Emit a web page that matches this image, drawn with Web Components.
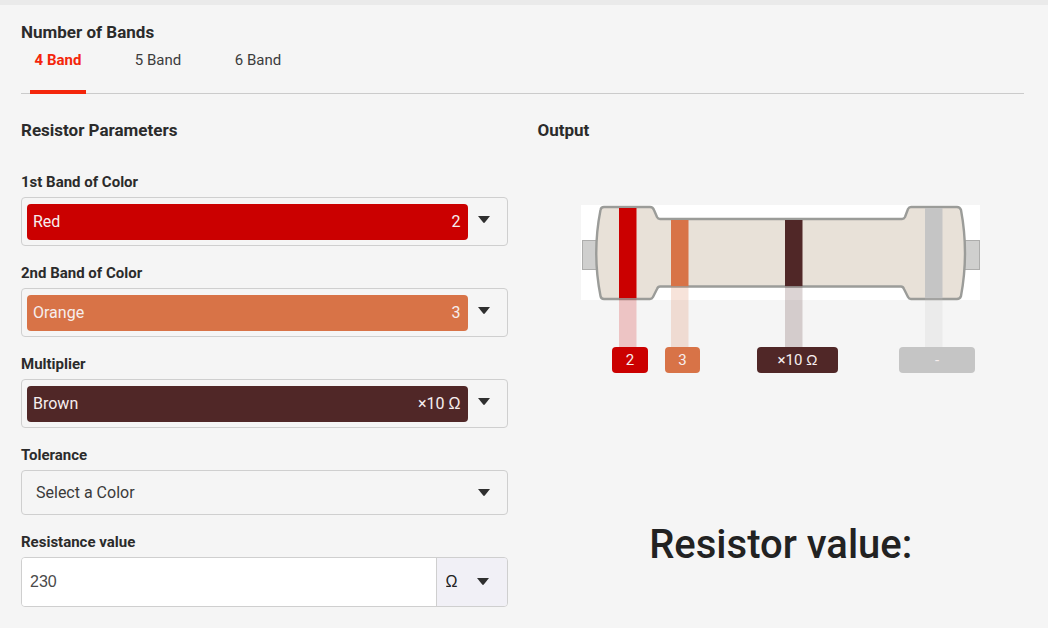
<!DOCTYPE html>
<html lang="en">
<head>
<meta charset="utf-8">
<title>Resistor Color Code Calculator</title>
<style>
  body { margin: 0; background: #f5f5f5; color: #2b2b2b; font-family: Roboto, "Liberation Sans", sans-serif; font-size: 16px; }
</style>
</head>
<body>
<resistor-calculator></resistor-calculator>

<script>
class BaseElement extends HTMLElement {
  render(html) {
    const t = document.createElement('template');
    t.innerHTML = html;
    this.attachShadow({ mode: 'open' }).append(t.content.cloneNode(true));
  }
}

const ARROW = '<svg class="arrow" viewBox="0 0 12 7" width="12" height="7" aria-hidden="true"><path d="M0 0H12L6.8 6.6Q6 7.4 5.2 6.6Z" fill="#2f2f2f"/></svg>';

customElements.define('band-tabs', class extends BaseElement {
  connectedCallback() {
    this.render(`
      <style>
        :host { display: block; border-bottom: 1px solid #cbcbcb; }
        div { display: flex; gap: 44px; margin: 0 9px -1px; }
        button { box-sizing: border-box; width: 56px; height: 46px; padding: 0 0 18px; border: 0; border-bottom: 4px solid transparent;
          background: none; font: 15px/20px Roboto, sans-serif; color: #3c3c3c; white-space: nowrap; }
        button[aria-selected=true] { color: #f4260b; border-color: #f4260b; font-weight: 700; }
      </style>
      <div role="tablist" aria-label="Number of Bands">
        <button role="tab" aria-selected="true">4 Band</button>
        <button role="tab" aria-selected="false">5 Band</button>
        <button role="tab" aria-selected="false">6 Band</button>
      </div>`);
    this.shadowRoot.addEventListener('click', (e) => {
      const hit = e.target.closest('button');
      if (!hit) return;
      for (const b of this.shadowRoot.querySelectorAll('button')) b.setAttribute('aria-selected', b === hit);
    });
  }
});

customElements.define('color-field', class extends BaseElement {
  connectedCallback() {
    const color = this.getAttribute('color');
    const code = (this.getAttribute('code') || '').replace('Ω', '<span class="ohm">Ω</span>');
    this.render(`
      <style>
        :host { display: block; }
        label { display: block; margin-bottom: 5px; font-size: 15px; line-height: 20px; font-weight: 700; }
        .box { display: grid; grid-template-columns: minmax(0, 1fr) 39px; align-items: center; box-sizing: border-box; height: 45px;
          padding-left: 5px; border: 1px solid #cfcfcf; border-radius: 4px; }
        .box.filled { height: 49px; }
        .chip { grid-area: 1 / 1; box-sizing: border-box; height: 36px; padding: 0 7px; border-radius: 4px; text-align: right;
          line-height: 36px; color: #f6eeee; background: ${color || 'transparent'}; }
        .ohm { font-family: "Liberation Sans", sans-serif; }
        select { grid-area: 1 / 1 / 2 / 3; z-index: 1; appearance: none; width: 100%; height: 36px; margin: 0; padding: 0 45px 0 9px; border: 0;
          background: none; font: 16px/20px Roboto, sans-serif; color: #3a3a3a; }
        .filled select { padding-left: 6px; color: #f6eeee; }
        .arrow { grid-area: 1 / 2; margin: 0 0 0 10px; }
        .filled .arrow { margin-bottom: 4px; }
      </style>
      <label for="s"><slot></slot></label>
      <div class="box ${color ? 'filled' : ''}">
        <span class="chip">${code}</span>
        <select id="s"><option>${this.getAttribute('value')}</option></select>
        ${ARROW}
      </div>`);
    this.shadowRoot.querySelector('select').setAttribute('aria-label', this.textContent);
  }
});

customElements.define('resistance-field', class extends BaseElement {
  connectedCallback() {
    this.render(`
      <style>
        :host { display: block; }
        label { display: block; margin-bottom: 5px; font-size: 15px; line-height: 20px; font-weight: 700; }
        .box { display: flex; box-sizing: border-box; height: 50px; border: 1px solid #cfcfcf; border-radius: 4px; overflow: hidden; }
        input { flex: 1; min-width: 0; padding: 0 8px; border: 0; background: #fff; font: 16px/20px "Liberation Sans", sans-serif; color: #4a4a4a; }
        .unit { display: grid; grid-template-columns: 31px 39px; align-items: center; box-sizing: border-box; width: 71px;
          border-left: 1px solid #cfcfcf; background: #f1f0f6; }
        select { grid-area: 1 / 1 / 2 / 3; appearance: none; width: 100%; height: 100%; padding: 0 0 0 9px; border: 0; background: none;
          font: 16px/20px "Liberation Sans", sans-serif; color: #222; }
        .arrow { grid-area: 1 / 2; margin: 0 0 2px 9px; }
      </style>
      <label for="v">Resistance value</label>
      <div class="box">
        <input id="v" type="text" inputmode="decimal" value="230">
        <div class="unit"><select aria-label="Unit"><option>Ω</option></select>${ARROW}</div>
      </div>`);
  }
});

customElements.define('resistor-diagram', class extends BaseElement {
  connectedCallback() {
    const bands = [
      { x: 38,  top: 3,  end: 93, fill: '#cb0000', bx: 31,  bw: 36, text: '2' },
      { x: 90,  top: 15, end: 81, fill: '#d87347', bx: 84,  bw: 35, text: '3' },
      { x: 204, top: 15, end: 81, fill: '#502727', bx: 176, bw: 81, text: '×10 <tspan class="ohm">Ω</tspan>' },
      { x: 344, top: 3,  end: 93, fill: '#c5c5c5', bx: 318, bw: 76, text: '-' }
    ];
    const outline = 'M23 2H69Q72 2 73 5L76 12Q77 14 79 14H321Q323 14 324 12L327 4Q328 2 330 2H376Q379 2 380 5Q388 48 380 91Q379 94 376 94H330Q328 94 327 92L323 84Q322 81.5 320 81.5H79Q77 81.5 76 84L72 92Q71 94 69 94H23Q20 94 19.5 91Q11 48 19.5 5Q20 2 23 2Z';
    this.render(`
      <style>
        :host { display: block; width: 100%; max-width: 400px; }
        svg { display: block; width: 100%; height: auto; }
        text { font: 15px Roboto, sans-serif; fill: #f6eeee; text-anchor: middle; }
        .ohm { font-family: "Liberation Sans", sans-serif; }
      </style>
      <svg viewBox="0 0 400 168" role="img" aria-label="Four band resistor">
        <rect width="399" height="95" fill="#fff"/>
        <g fill="#cfcfce" stroke="#adadac"><rect x="1.5" y="35.5" width="16" height="29"/><rect x="382.5" y="35.5" width="16" height="29"/></g>
        <path d="${outline}" fill="#e8e1d8" stroke="#9b9c99" stroke-width="2.4"/>
        ${bands.map(b => `
          <rect x="${b.x}" y="${b.top}" width="17.5" height="${b.end - b.top}" fill="${b.fill}"/>
          <rect x="${b.x}" y="${b.end}" width="17.5" height="${142 - b.end}" fill="${b.fill}" opacity="0.2"/>
          <rect x="${b.bx}" y="142" width="${b.bw}" height="26" rx="4" fill="${b.fill}"/>
          <text x="${b.bx + b.bw / 2}" y="160">${b.text}</text>`).join('')}
      </svg>`);
  }
});

customElements.define('resistor-calculator', class extends BaseElement {
  connectedCallback() {
    this.render(`
      <style>
        :host { display: block; border-top: 5px solid #eaeaea; padding: 15px 24px 21px 21px; }
        h2 { margin: 0; font-size: 17px; line-height: 24px; font-weight: 700; }
        band-tabs { margin-top: 4px; }
        .columns { display: grid; grid-template-columns: minmax(0, 1fr) minmax(0, 1fr); gap: 30px; margin-top: 24px; }
        .fields { display: grid; gap: 17px; margin-top: 30px; }
        .output { display: flex; flex-direction: column; align-items: center; margin-top: 63px; }
        .result { margin: 148px 0 0; font-size: 40px; line-height: 48px; font-weight: 500; color: #222; }
      </style>
      <h2>Number of Bands</h2>
      <band-tabs></band-tabs>
      <div class="columns">
        <section>
          <h2>Resistor Parameters</h2>
          <div class="fields">
            <color-field color="#cb0000" value="Red" code="2">1st Band of Color</color-field>
            <color-field color="#d87347" value="Orange" code="3">2nd Band of Color</color-field>
            <color-field color="#502727" value="Brown" code="×10 Ω">Multiplier</color-field>
            <color-field value="Select a Color">Tolerance</color-field>
            <resistance-field></resistance-field>
          </div>
        </section>
        <section>
          <h2>Output</h2>
          <div class="output">
            <resistor-diagram></resistor-diagram>
            <p class="result">Resistor value:</p>
          </div>
        </section>
      </div>`);
  }
});
</script>
</body>
</html>
